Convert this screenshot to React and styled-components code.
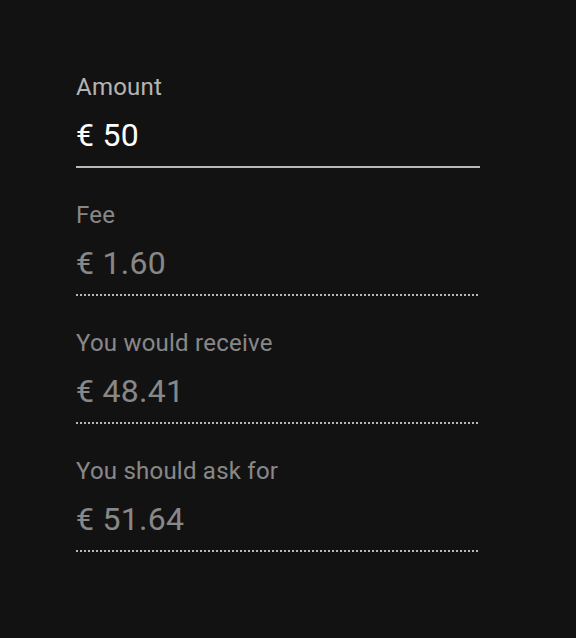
import React from "react"
import styled, { createGlobalStyle } from "styled-components"

const GlobalStyle = createGlobalStyle`
  html, body {
    margin: 0;
    background: #121212;
  }
  body {
    font-family: Roboto, "Liberation Sans", sans-serif;
    -webkit-font-smoothing: antialiased;
  }
`

const Page = styled.div`
  min-height: 638px;
  box-sizing: border-box;
  padding: 72px 0 0 76px;
  background: #121212;
`

const Form = styled.div`
  display: flex;
  flex-direction: column;
  gap: 32px;
  width: 404px;
`

const Field = styled.div`
  display: flex;
  flex-direction: column;
`

const Label = styled.label`
  display: block;
  height: 32px;
  font-size: 24px;
  line-height: 31.5px;
  letter-spacing: 0.00938em;
  color: ${({ disabled }) =>
    disabled ? "rgba(255, 255, 255, 0.5)" : "rgba(255, 255, 255, 0.7)"};
`

const Value = styled.div`
  padding: 8px 0;
  margin-right: ${({ disabled }) => (disabled ? "2px" : "0")};
  font-size: 32px;
  line-height: 46px;
  letter-spacing: 0.00938em;
  color: ${({ disabled }) => (disabled ? "rgba(255, 255, 255, 0.5)" : "#fff")};
  border-bottom: 2px ${({ disabled }) => (disabled ? "dotted" : "solid")}
    rgba(255, 255, 255, 0.7);
`

const fields = [
  { label: "Amount", value: "€ 50" },
  { label: "Fee", value: "€ 1.60", disabled: true },
  { label: "You would receive", value: "€ 48.41", disabled: true },
  { label: "You should ask for", value: "€ 51.64", disabled: true },
]

export default function App() {
  return (
    <>
      <GlobalStyle />
      <Page>
        <Form>
          {fields.map((f) => (
            <Field key={f.label}>
              <Label disabled={f.disabled}>{f.label}</Label>
              <Value disabled={f.disabled}>{f.value}</Value>
            </Field>
          ))}
        </Form>
      </Page>
    </>
  )
}
